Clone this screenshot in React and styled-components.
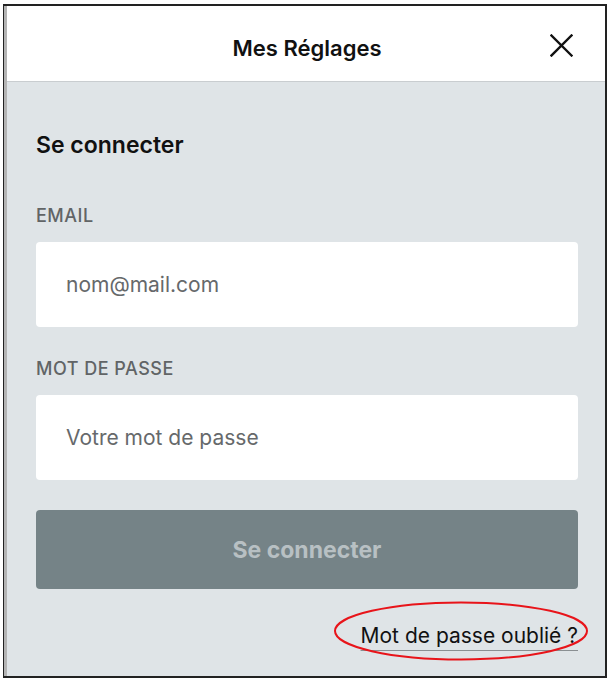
import React from "react";
import styled, { createGlobalStyle } from "styled-components";

const FONT = `Inter, Roboto, "Liberation Sans", sans-serif`;

const Global = createGlobalStyle`
  html, body { margin: 0; padding: 0; background: #fff; }
  body { font-family: ${FONT}; }
  * { box-sizing: border-box; }
`;

const Frame = styled.div`
  position: relative;
  margin: 4px 0 0 3px;
  width: 604px;
  height: 674px;
  border: 1px solid #222;
  border-top-width: 2px;
  border-bottom-width: 2px;
  border-right-width: 2px;
  box-shadow: inset 3px 0 0 #b4b4b4;
  background: #dfe4e7;
  display: flex;
  flex-direction: column;
  overflow: hidden;
`;

const Header = styled.header`
  height: 76px;
  background: #fff;
  border-bottom: 1px solid #c9cdd0;
  margin-left: 3px;
  display: flex;
  align-items: center;
  justify-content: center;
  position: relative;
`;

const Title = styled.h1`
  margin: 0;
  font-size: 22px;
  font-weight: 600;
  color: #111;
  transform: translate(1px, 4px);
`;

const Close = styled.button`
  position: absolute;
  right: 31px;
  top: 26px;
  width: 26px;
  height: 26px;
  padding: 0;
  border: 0;
  background: none;
  display: flex;
  align-items: center;
  justify-content: center;
`;

const Body = styled.main`
  flex: 1;
  padding: 49px 27px 0 32px;
  display: flex;
  flex-direction: column;
`;

const Heading = styled.h2`
  margin: 0;
  font-size: 23px;
  line-height: 28px;
  font-weight: 600;
  color: #111;
`;

const Label = styled.label`
  display: block;
  font-size: 18px;
  line-height: 20px;
  font-weight: 500;
  letter-spacing: 0.5px;
  color: #616466;
  margin-top: ${(p) => p.$mt}px;
`;

const Input = styled.input`
  display: block;
  margin-top: ${(p) => p.$mt}px;
  width: 100%;
  height: 85px;
  border: 0;
  border-radius: 4px;
  background: #fff;
  padding: 0 30px;
  font-family: ${FONT};
  font-size: 21px;
  color: #222;
  outline: none;
  &::placeholder { color: #66696b; }
`;

const Submit = styled.button`
  margin-top: 30px;
  width: 100%;
  height: 79px;
  border: 0;
  border-radius: 4px;
  background: #758387;
  color: #b8c0c3;
  font-family: ${FONT};
  font-size: 23px;
  font-weight: 700;
  padding-top: 2px;
`;

const LinkRow = styled.div`
  margin-top: 35px;
  display: flex;
  justify-content: flex-end;
  position: relative;
`;

const Forgot = styled.a`
  font-size: 21px;
  line-height: 24px;
  color: #111;
  text-decoration: underline;
  text-decoration-color: #8a8f92;
  text-decoration-thickness: 1px;
  text-underline-offset: 7px;
`;

const Circle = styled.svg`
  position: absolute;
  right: -12px;
  top: -24px;
  pointer-events: none;
`;

export default function App() {
  return (
    <>
      <Global />
      <Frame>
        <Header>
          <Title>Mes Réglages</Title>
          <Close aria-label="Fermer">
            <svg width="23" height="23" viewBox="0 0 23 23">
              <path d="M1.5 1.5 L21.5 21.5 M21.5 1.5 L1.5 21.5" stroke="#111" strokeWidth="2.4" strokeLinecap="square" />
            </svg>
          </Close>
        </Header>
        <Body>
          <Heading>Se connecter</Heading>
          <Label $mt={47}>EMAIL</Label>
          <Input $mt={16} type="email" placeholder="nom@mail.com" />
          <Label $mt={32}>MOT DE PASSE</Label>
          <Input $mt={16} type="password" placeholder="Votre mot de passe" />
          <Submit>Se connecter</Submit>
          <LinkRow>
            <Forgot href="#">Mot de passe oublié ?</Forgot>
            <Circle width="258" height="62" viewBox="0 0 258 62">
              <ellipse cx="129" cy="31" rx="126" ry="28.5" fill="none" stroke="#e8141a" strokeWidth="2" />
            </Circle>
          </LinkRow>
        </Body>
      </Frame>
    </>
  );
}
